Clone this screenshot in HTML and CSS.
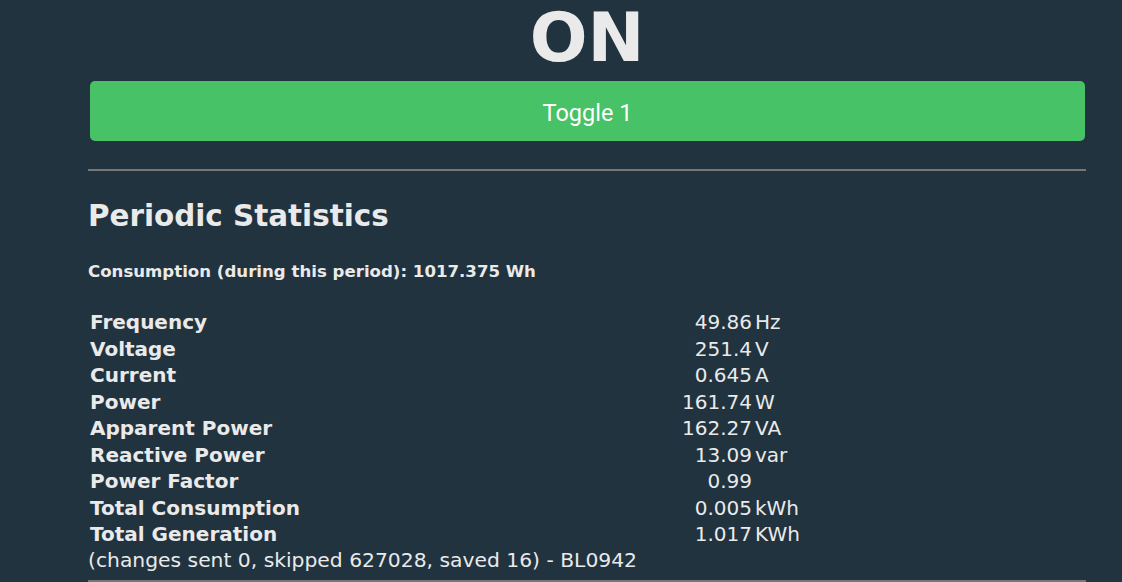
FILE: index.html
```html
<!DOCTYPE html>
<html>
<head>
<meta charset="utf-8">
<link rel="stylesheet" href="styles.css">
</head>
<body>
<div class="wrap">
  <div class="state">ON</div>
  <button class="toggle">Toggle 1</button>
  <hr class="rule rule-top">
  <h2 class="title">Periodic Statistics</h2>
  <div class="consumption">Consumption (during this period): 1017.375 Wh</div>
  <div class="stats">
    <div class="lbl">Frequency</div><div class="val">49.86</div><div class="unit">Hz</div>
    <div class="lbl">Voltage</div><div class="val">251.4</div><div class="unit">V</div>
    <div class="lbl">Current</div><div class="val">0.645</div><div class="unit">A</div>
    <div class="lbl">Power</div><div class="val">161.74</div><div class="unit">W</div>
    <div class="lbl">Apparent Power</div><div class="val">162.27</div><div class="unit">VA</div>
    <div class="lbl">Reactive Power</div><div class="val">13.09</div><div class="unit">var</div>
    <div class="lbl">Power Factor</div><div class="val">0.99</div><div class="unit"></div>
    <div class="lbl">Total Consumption</div><div class="val">0.005</div><div class="unit">kWh</div>
    <div class="lbl">Total Generation</div><div class="val">1.017</div><div class="unit">KWh</div>
  </div>
  <div class="changes">(changes sent 0, skipped 627028, saved 16) - BL0942</div>
  <hr class="rule rule-bottom">
</div>
</body>
</html>
```
FILE: styles.css
```css
html, body {
  margin: 0;
  padding: 0;
  background: #21333f;
}
body {
  color: #eaeaea;
  font-family: "DejaVu Sans", Verdana, sans-serif;
  overflow: hidden;
}
.wrap {
  margin-left: 88px;
  width: 998px;
}
.state {
  font-size: 68px;
  font-weight: bold;
  line-height: 76px;
  text-align: center;
}
.toggle {
  display: block;
  margin: 5px 0 0 2px;
  width: 995px;
  height: 60px;
  border: 0;
  border-radius: 5px;
  background: #47c266;
  color: #fff;
  font-family: Roboto, "Liberation Sans", sans-serif;
  font-size: 23.5px;
  padding: 3px 0 0 0;
}
.rule {
  border: 0;
  height: 2px;
  background: #777;
  margin: 0;
}
.rule-top {
  margin-top: 28px;
}
.title {
  margin: 28px 0 0 0;
  font-size: 29.4px;
  font-weight: bold;
  line-height: normal;
}
.consumption {
  margin-top: 29px;
  font-size: 16.6px;
  font-weight: bold;
}
.stats {
  margin-top: 28px;
  padding-left: 2px;
  display: grid;
  grid-template-columns: 500px 162px auto;
  font-size: 20px;
  line-height: 26.5px;
}
.lbl {
  font-weight: bold;
}
.val {
  text-align: right;
}
.unit {
  padding-left: 3px;
}
.changes {
  font-size: 20.3px;
}
.rule-bottom {
  margin-top: 8px;
}
```
